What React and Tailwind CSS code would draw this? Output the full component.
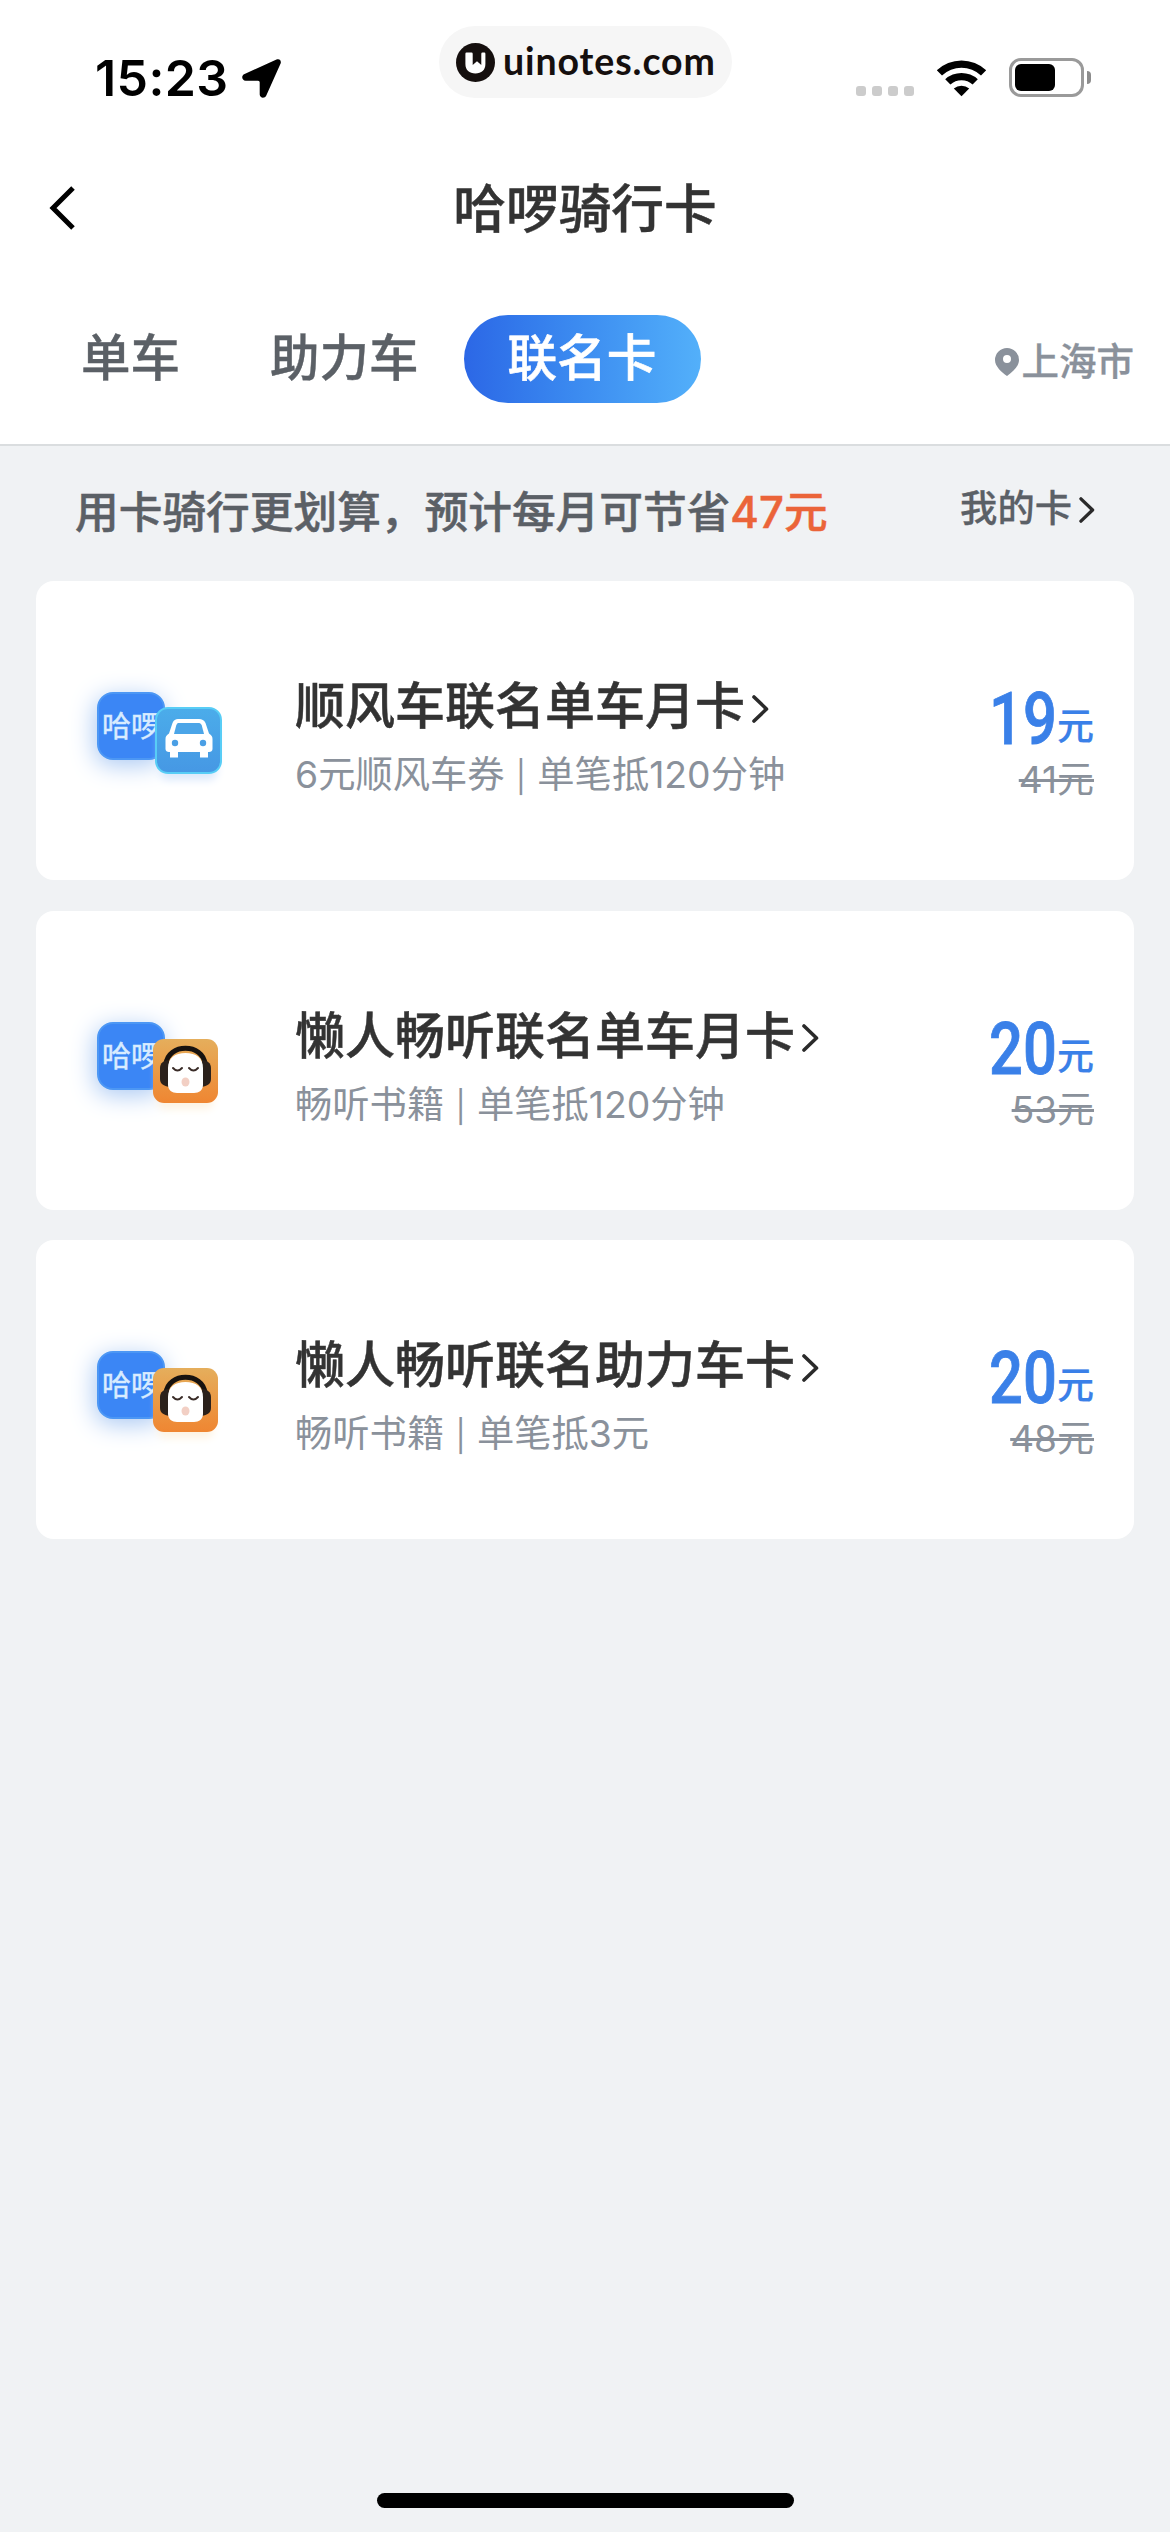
import React, { useState } from "react";

const tabs = ["单车", "助力车", "联名卡"];

const cards = [
  {
    id: 1,
    title: "顺风车联名单车月卡",
    gift: "6元顺风车券",
    discount: "单笔抵120分钟",
    price: 19,
    oldPrice: 41,
    partner: "car",
  },
  {
    id: 2,
    title: "懒人畅听联名单车月卡",
    gift: "畅听书籍",
    discount: "单笔抵120分钟",
    price: 20,
    oldPrice: 53,
    partner: "audio",
  },
  {
    id: 3,
    title: "懒人畅听联名助力车卡",
    gift: "畅听书籍",
    discount: "单笔抵3元",
    price: 20,
    oldPrice: 48,
    partner: "audio",
  },
];

function Chevron({ className }) {
  return (
    <svg viewBox="0 0 17 28" fill="none" className={className}>
      <path d="M2 2 L14.5 14 L2 26" stroke="#2a2a2a" strokeWidth="3.6" strokeLinecap="round" strokeLinejoin="round" />
    </svg>
  );
}

function StatusBar() {
  return (
    <div className="flex h-[156px] items-start">
      <div className="flex w-[439px] items-center pl-[95px] pt-[48px]">
        <span className="w-[147px] text-[50px] font-semibold leading-[60px] tracking-[0.4px] text-black">15:23</span>
        <svg viewBox="0 0 39 39" className="h-[39px] w-[39px]">
          <path
            d="M34.5 .6C37.400 -.6 39.600 1.500 38.600 4.600L24.300 36.400C22.800 39.800 17.800 39.200 17.700 35.500V23.300Q17.700 21.700 16.100 21.700H3.700C-.2 21.600 -1.200 16.400 2.600 14.900Z"
            fill="#000"
          />
        </svg>
      </div>

      <div className="mt-[26px] flex h-[72px] w-[293px] items-center rounded-full bg-[#f6f6f6] pl-[17px]">
        <svg viewBox="0 0 39 39" className="h-[39px] w-[39px]">
          <circle cx="19.500" cy="19.500" r="19.500" fill="#150f0e" />
          <path
            d="M10.500 9.500H15.500Q16.700 9.500 16.700 10.700V22L21 18.300L25.300 22V10.700Q25.300 9.500 26.500 9.500H28.300Q29.400 9.500 29.400 10.700V21C29.400 27 25.500 30.500 19.400 30.500S9.400 27 9.400 21V10.700Q9.400 9.500 10.500 9.500Z"
            fill="#fff"
          />
        </svg>
        <span className="ml-[8px] pb-[3px] font-['Lato'] text-[37.5px] font-bold leading-[48px] tracking-[0.9px] text-[#150f0e]">uinotes.com</span>
      </div>

      <div className="flex items-center pl-[124px] pt-[58px]">
        <div className="flex gap-[6px] pt-[27px]">
          <i className="h-[10px] w-[10px] rounded-[3px] bg-[#cccccc]" />
          <i className="h-[10px] w-[10px] rounded-[3px] bg-[#cccccc]" />
          <i className="h-[10px] w-[10px] rounded-[3px] bg-[#cccccc]" />
          <i className="h-[10px] w-[10px] rounded-[3px] bg-[#cccccc]" />
        </div>
        <svg viewBox="0 0 51 38" className="ml-[22px] h-[38px] w-[51px]">
          <path d="M.8 11.200A36 36 0 0 1 50.200 11.200L45 16.400A28.500 28.500 0 0 0 6 16.400Z" fill="#000" />
          <path d="M9.200 20.300A24 24 0 0 1 41.800 20.300L36.600 25.500A16.500 16.500 0 0 0 14.400 25.500Z" fill="#000" />
          <path d="M17.800 29.500A12 12 0 0 1 33.200 29.500L25.500 37.300Z" fill="#000" />
        </svg>
        <div className="ml-[22px] flex h-[39px] w-[75px] items-center rounded-[12px] border-[3px] border-[#9a9a9a] pl-[3px]">
          <div className="h-[27px] w-[40px] rounded-[6px] bg-black" />
        </div>
        <div className="ml-[3px] h-[13px] w-[4px] rounded-r-full bg-[#8c8c8c]" />
      </div>
    </div>
  );
}

function CarTile() {
  return (
    <div className="absolute left-[58px] top-[15px] h-[67px] w-[67px] rounded-[13px] border-2 border-[#58cdf6] bg-linear-to-b from-[#4bacea] to-[#4698e4] shadow-[0_11px_8px_-5px_#dbe8fb]">
      <svg viewBox="0 0 48 41" className="ml-[8px] mt-[9px] h-[41px] w-[48px]">
        <path
          d="M13 1H34C37 1 39 2 40.500 5L44 15.500C46.500 17 47.500 18.500 47.500 21V31C47.500 33 46 34 44 34H43V39.500H35V34H13V39.500H5V34H4C2 34 .5 33 .5 31V21C.5 18.500 1.500 17 4 15.500L7.500 5C8.800 2 10.500 1 13 1Z"
          fill="#fff"
        />
        <path d="M14 5H33C35 5 36 5.600 36.800 7.500L39 16H9L11.200 7.500C12 5.600 12.500 5 14 5Z" fill="#4ba5e8" />
        <circle cx="10" cy="25" r="3.200" fill="#4a9fe5" />
        <circle cx="38" cy="25" r="3.200" fill="#4a9fe5" />
      </svg>
    </div>
  );
}

function AudioTile() {
  return (
    <div className="absolute left-[56px] top-[17px] h-[64px] w-[65px] rounded-[11px] bg-linear-to-b from-[#e5ae5c] via-[#ea9a45] to-[#ef8632] shadow-[0_11px_8px_-5px_#fdf3e2]">
      <svg viewBox="0 0 65 64" className="h-[64px] w-[65px]">
        <path d="M13 25C15 4 50 4 52 25" fill="none" stroke="#17120f" strokeWidth="5" />
        <path d="M16 21C11 21 7 24 7 29V40C7 45 11 47 16 48Z" fill="#2b211b" />
        <path d="M49 21C54 21 58 24 58 29V40C58 45 54 47 49 48Z" fill="#2b211b" />
        <path d="M15 29C15 19 22 14 32.500 14S50 19 50 29V46C50 51 46 54 41 54H24C19 54 15 51 15 46Z" fill="#fff" />
        <path d="M20 29Q24.500 34 29 29M36 29Q40.500 34 45 29" fill="none" stroke="#3a2c28" strokeWidth="2" strokeLinecap="round" />
        <ellipse cx="32.500" cy="43" rx="4" ry="4.500" fill="#f2cfc4" />
      </svg>
    </div>
  );
}

function CardLogo({ partner }) {
  return (
    <div className="relative mt-[111px] h-[82px] w-[198px]">
      <div className="flex h-[68px] w-[68px] items-center overflow-hidden rounded-[16px] border-2 border-[#4c97f4] bg-[#3b86f5] pl-[3px] shadow-[-2px_5px_24px_#a9c8f3]">
        <span className="whitespace-nowrap pt-[2px] text-[29px] leading-[32px] text-[#d9ecff] [-webkit-text-stroke:0.5px]">哈啰</span>
      </div>
      {partner === "car" ? <CarTile /> : <AudioTile />}
    </div>
  );
}

function RideCard({ card }) {
  return (
    <div className="flex h-[299px] items-start rounded-[18px] bg-white pl-[61px] pr-[40px]">
      <CardLogo partner={card.partner} />
      <div className="flex-1 pt-[95px]">
        <div className="flex items-center">
          <h2 className="text-[50px] font-medium leading-[60px] text-[#333333] [-webkit-text-stroke:0.5px]">{card.title}</h2>
          <Chevron className="ml-[7px] mt-[5px] h-[28px] w-[17px]" />
        </div>
        <p className="mt-[9px] text-[37.3px] leading-[60px] text-[#8a919b]">
          {card.gift} <span className="px-[0.7px] text-[31px]">|</span> {card.discount}
        </p>
      </div>
      <div className="flex flex-col items-end pt-[103px]">
        <div className="flex h-[72px] items-start text-[#3a80e8]">
          <span className="origin-right scale-x-[0.83] font-['Roboto'] text-[72px] font-medium leading-[72px] [-webkit-text-stroke:0.8px]">
            {card.price}
          </span>
          <span className="mt-[23px] text-[37px] font-medium leading-[40px] [-webkit-text-stroke:0.2px]">元</span>
        </div>
        <del className="text-[37px] leading-[48px] text-[#8a919b]">{card.oldPrice}元</del>
      </div>
    </div>
  );
}

function App() {
  const [activeTab, setActiveTab] = useState("联名卡");

  return (
    <div className="flex h-[2532px] w-[1170px] flex-col bg-[#f0f2f4] font-['Inter','Noto_Sans_CJK_SC',sans-serif]">
      {/* Header */}
      <header className="h-[446px] border-b-2 border-[#dadddf] bg-white">
        <StatusBar />

        <div className="flex h-[104px] items-center px-[49px]">
          <svg viewBox="0 0 26 44" fill="none" className="h-[44px] w-[26px]">
            <path d="M24 2 L4 22 L24 42" stroke="#000" strokeWidth="5" />
          </svg>
          <h1 className="flex-1 pr-[26px] pt-[2px] text-center text-[52.7px] font-medium leading-[60px] text-[#333333] [-webkit-text-stroke:0.5px]">
            哈啰骑行卡
          </h1>
        </div>

        <div className="flex items-center pl-[36px] pr-[36px] pt-[55px]">
          {tabs.map((tab) => (
            <button
              key={tab}
              onClick={() => setActiveTab(tab)}
              className={
                activeTab === tab
                  ? "h-[88px] rounded-full bg-linear-to-r from-[#2c67e6] to-[#53b0fa] px-[44px] pb-[2px] text-[49.7px] font-medium text-white [-webkit-text-stroke:0.6px]"
                  : "h-[88px] px-[45px] pb-[2px] text-[49.5px] font-medium text-[#5b6066] [-webkit-text-stroke:0.4px]"
              }
            >
              {tab}
            </button>
          ))}
          <div className="ml-auto flex items-center pt-[6px]">
            <svg viewBox="0 0 24 28" className="h-[28px] w-[24px]">
              <path
                d="M12 0A12 12 0 0 1 24 12C24 18.500 17.500 24 12 28C6.500 24 0 18.500 0 12A12 12 0 0 1 12 0ZM12 7A4 4 0 1 0 12 15A4 4 0 1 0 12 7Z"
                fill="#8a919b"
                fillRule="evenodd"
              />
            </svg>
            <span className="ml-[3px] text-[37.500px] font-medium leading-[48px] text-[#8a919b] [-webkit-text-stroke:0.3px]">上海市</span>
          </div>
        </div>
      </header>

      {/* Savings banner */}
      <div className="flex h-[135px] items-start justify-between pl-[75px] pr-[75px]">
        <p className="pt-[37px] text-[43.7px] font-medium leading-[60px] text-[#5b6066] [-webkit-text-stroke:0.5px]">
          用卡骑行更划算，预计每月可节省<span className="text-[#eb6439]">47元</span>
        </p>
        <div className="flex items-center pt-[33px]">
          <span className="text-[37.3px] font-medium leading-[60px] text-[#5b6066] [-webkit-text-stroke:0.3px]">我的卡</span>
          <Chevron className="ml-[7px] mt-[2px] h-[26px] w-[16px]" />
        </div>
      </div>

      {/* Card list */}
      <div className="flex flex-col gap-[30.5px] px-[36px]">
        {cards.map((card) => (
          <RideCard key={card.id} card={card} />
        ))}
      </div>

      {/* Home indicator */}
      <div className="mx-auto mb-[24px] mt-auto h-[15px] w-[417px] rounded-full bg-black" />
    </div>
  );
}

export default App;
